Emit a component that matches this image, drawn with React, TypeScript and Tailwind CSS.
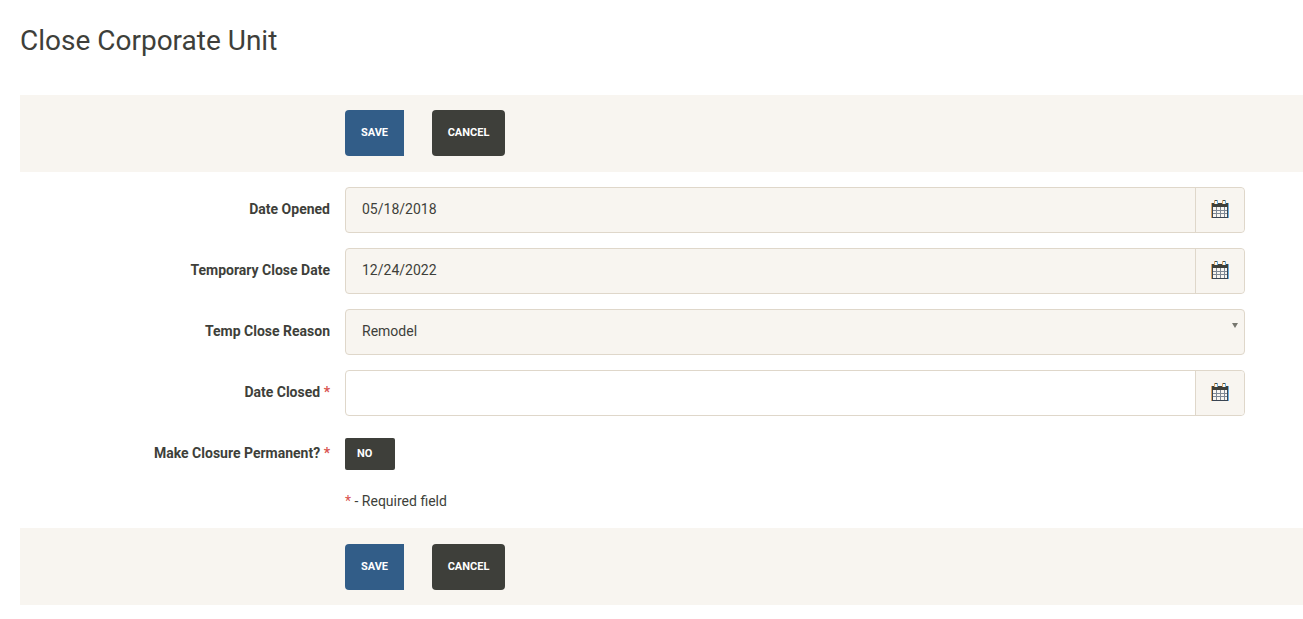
function CalendarIcon() {
  return (
    <svg width="18" height="18" viewBox="0 0 18 18" className="block mb-[2px]" shapeRendering="crispEdges">
      <rect x="0" y="3" width="1" height="15" fill="#d9a566" />
      <rect x="17" y="3" width="1" height="15" fill="#6aaee0" />
      <rect x="1" y="3" width="16" height="4" fill="#3e3f3a" />
      <rect x="1" y="7" width="16" height="11" fill="#f8f5f0" />
      <path d="M5.5 7v10M9.5 7v10M13.5 7v10" stroke="#7d8794" strokeWidth="1" fill="none" />
      <path d="M1 10.5h16M1 13.5h16" stroke="#7d8794" strokeWidth="1" fill="none" />
      <path d="M1.5 7v11M16.5 7v11M1 17.5h16" stroke="#3a4452" strokeWidth="1" fill="none" />
      <rect x="3" y="0" width="1" height="4" fill="#d9a566" />
      <rect x="4" y="0" width="2" height="1" fill="#4a4a44" />
      <rect x="4" y="1" width="2" height="3" fill="#f8f5f0" />
      <rect x="6" y="0" width="1" height="4" fill="#6aaee0" />
      <rect x="11" y="0" width="1" height="4" fill="#d9a566" />
      <rect x="12" y="0" width="2" height="1" fill="#4a4a44" />
      <rect x="12" y="1" width="2" height="3" fill="#f8f5f0" />
      <rect x="14" y="0" width="1" height="4" fill="#6aaee0" />
    </svg>
  );
}

function Buttons({ className }: { className: string }) {
  return (
    <div className={`flex bg-[#f8f5f0] pl-[325px] ${className}`}>
      <button className="w-[59px] h-[46px] bg-[#325d88] rounded-l-[4px] text-white text-[11px] font-bold">SAVE</button>
      <button className="ml-[28px] w-[73px] h-[46px] bg-[#3e3f3a] rounded-[4px] text-white text-[11px] font-bold">CANCEL</button>
    </div>
  );
}

function Label({ text, required }: { text: string; required?: boolean }) {
  return (
    <div className="w-[310px] mr-[15px] mb-[2px] shrink-0 text-right text-[14px] font-bold text-[#3e3f3a] leading-[20px]">
      {text}
      {required && <span className="text-[#d9534f]"> *</span>}
    </div>
  );
}

function DateField({ value, filled }: { value?: string; filled?: boolean }) {
  return (
    <div className={`flex h-[46px] w-[900px] border border-[#dfd7ca] rounded-[4px] ${filled ? "bg-[#f8f5f0]" : "bg-white"}`}>
      <div className="flex-1 flex items-center pl-[16px] pb-[2px] text-[14px] text-[#3e3f3a]">{value}</div>
      <div className="w-[49px] flex items-center justify-center border-l border-[#dfd7ca] bg-[#f8f5f0] rounded-r-[4px]">
        <CalendarIcon />
      </div>
    </div>
  );
}

export default function App() {
  return (
    <div className="h-[619px] overflow-hidden bg-white pl-[20px] text-[#3e3f3a] font-['Roboto',sans-serif]">
      <h1 className="pt-[24px] h-[95px] text-[28px] leading-[34px] font-normal">Close Corporate Unit</h1>
      <Buttons className="pt-[15px] pb-[16px]" />
      <div className="pt-[15px] flex flex-col gap-[15px]">
        <div className="flex items-center">
          <Label text="Date Opened" />
          <DateField value="05/18/2018" filled />
        </div>
        <div className="flex items-center">
          <Label text="Temporary Close Date" />
          <DateField value="12/24/2022" filled />
        </div>
        <div className="flex items-center">
          <Label text="Temp Close Reason" />
          <div className="relative flex items-center h-[46px] w-[900px] border border-[#dfd7ca] rounded-[4px] bg-[#f8f5f0] pl-[16px] pb-[2px] text-[14px]">
            Remodel
            <span className="absolute right-[6px] top-[13px] w-0 h-0 border-x-[3px] border-x-transparent border-t-[5px] border-t-[#77776f]" />
          </div>
        </div>
        <div className="flex items-center">
          <Label text="Date Closed" required />
          <DateField />
        </div>
      </div>
      <div className="flex items-center mt-[22px]">
        <Label text="Make Closure Permanent?" required />
        <div className="w-[50px] h-[32px] flex items-center pl-[12px] bg-[#3e3f3a] rounded-[2px] text-white text-[11px] font-bold">NO</div>
      </div>
      <div className="pl-[325px] mt-[21px] h-[37px] text-[14px] leading-[20px]">
        <span className="text-[#d9534f]">*</span> - Required field
      </div>
      <Buttons className="pt-[16px] pb-[15px]" />
    </div>
  );
}
